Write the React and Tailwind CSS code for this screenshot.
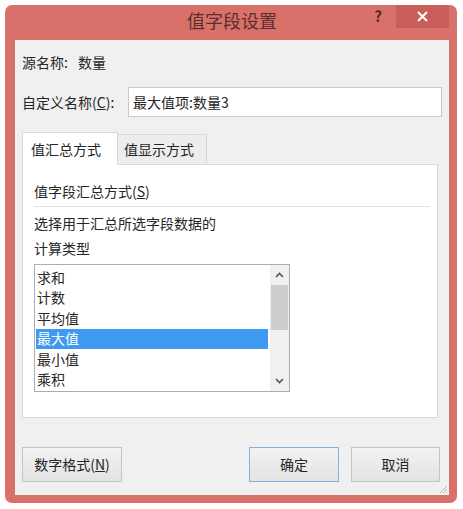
import React from "react";

const font = { fontFamily: '"Noto Sans CJK SC", "Noto Sans", sans-serif' };

const items = ["求和", "计数", "平均值", "最大值", "最小值", "乘积"];

function Button({ children, primary, className = "" }) {
    return (
        <button
            className={`h-[35px] flex items-center justify-center text-[14px] text-[#262626] bg-gradient-to-b from-[#f2f2f2] to-[#e3e3e3] border ${
                primary ? "border-[#7fb2e6]" : "border-[#c4c4c4]"
            } ${className}`}
        >
            {children}
        </button>
    );
}

export default function App() {
    return (
        <div className="w-[463px] h-[509px] bg-white pt-[5px] pl-[5px]" style={font}>
            {/* 窗口 */}
            <div className="w-[452px] h-[498px] rounded-[7px] bg-[#d9716b] flex flex-col pl-[10px] pr-[8px] pb-[8px]">
                {/* 标题栏 */}
                <div className="h-[35px] flex items-start">
                    <div className="flex-1 h-[30px] flex items-center justify-center pl-[86px] text-[18px] text-[#5a2e2e]">
                        值字段设置
                    </div>
                    <div className="w-[30px] h-[22px] flex items-center justify-center text-[15px] font-bold text-[#4a2a2a]">
                        ?
                    </div>
                    <div className="w-[53px] h-[23px] ml-[3px] bg-[#c95d58] flex items-center justify-center">
                        <svg width="11" height="11" viewBox="0 0 11 11">
                            <path d="M1 1L10 10M10 1L1 10" stroke="#fff" strokeWidth="2" />
                        </svg>
                    </div>
                </div>

                {/* 客户区 */}
                <div className="flex-1 bg-[#f0f0f0] px-[7px] text-[14px] text-[#262626] relative">
                    <div className="mt-[12px] h-[20px] flex items-center">
                        <span>源名称:</span>
                        <span className="ml-[10px]">数量</span>
                    </div>

                    <div className="mt-[15px] h-[30px] flex items-center">
                        <span className="w-[106px]">
                            自定义名称(<span className="underline">C</span>):
                        </span>
                        <div className="flex-1 h-[30px] bg-white border border-[#c9c9c9] flex items-center pl-[4px]">
                            最大值项:数量3
                        </div>
                    </div>

                    {/* 选项卡 */}
                    <div className="mt-[15px] flex items-end">
                        <div className="relative z-10 -mb-px w-[96px] h-[33px] bg-white border border-b-0 border-[#d9d9d9] flex items-center pl-[8px]">
                            值汇总方式
                        </div>
                        <div className="w-[89px] h-[30px] bg-[#ededed] border border-l-0 border-b-0 border-[#d9d9d9] flex items-center pl-[6px]">
                            值显示方式
                        </div>
                    </div>

                    <div className="w-[416px] h-[254px] bg-white border border-[#d9d9d9] px-[11px]">
                        <div className="h-[24px] mt-[14px] flex items-center">
                            值字段汇总方式(<span className="underline">S</span>)
                        </div>
                        <div className="mt-[3px] h-px bg-[#e3e3e3] -mr-[4px]" />
                        <div className="mt-[6px] h-[20px] flex items-center">
                            选择用于汇总所选字段数据的
                        </div>
                        <div className="mt-[5px] h-[20px] flex items-center">计算类型</div>

                        {/* 列表框 */}
                        <div className="mt-[6px] w-[256px] h-[128px] border border-[#adadad] flex">
                            <div className="flex-1 pt-[2px] pl-[1px] pr-[2px]">
                                {items.map((it) => (
                                    <div
                                        key={it}
                                        className={`h-[20.5px] flex items-center pl-[1px] ${
                                            it === "最大值" ? "bg-[#3d9af0] text-white" : ""
                                        }`}
                                    >
                                        {it}
                                    </div>
                                ))}
                            </div>
                            <div className="w-[19px] bg-[#f0f0f0] flex flex-col items-center">
                                <div className="h-[20px] flex items-center justify-center">
                                    <svg width="9" height="6" viewBox="0 0 9 6">
                                        <path d="M1 5L4.5 1.5L8 5" stroke="#555" strokeWidth="1.6" fill="none" />
                                    </svg>
                                </div>
                                <div className="w-[17px] h-[45px] bg-[#cdcdcd]" />
                                <div className="flex-1" />
                                <div className="h-[20px] flex items-center justify-center">
                                    <svg width="9" height="6" viewBox="0 0 9 6">
                                        <path d="M1 1L4.5 4.5L8 1" stroke="#555" strokeWidth="1.6" fill="none" />
                                    </svg>
                                </div>
                            </div>
                        </div>
                    </div>

                    {/* 底部按钮 */}
                    <div className="mt-[29px] flex items-center">
                        <Button className="w-[100px]">
                            数字格式(<span className="underline">N</span>)
                        </Button>
                        <div className="flex-1" />
                        <Button primary className="w-[90px]">确定</Button>
                        <Button className="w-[89px] ml-[12px] mr-[2px]">取消</Button>
                    </div>

                    {/* 调整大小手柄 */}
                    <svg className="absolute right-[1px] bottom-[1px]" width="10" height="10" viewBox="0 0 10 10">
                        <path d="M9 2L2 9M9 5L5 9M9 8L8 9" stroke="#b5b5b5" strokeWidth="1" />
                    </svg>
                </div>
            </div>
        </div>
    );
}
